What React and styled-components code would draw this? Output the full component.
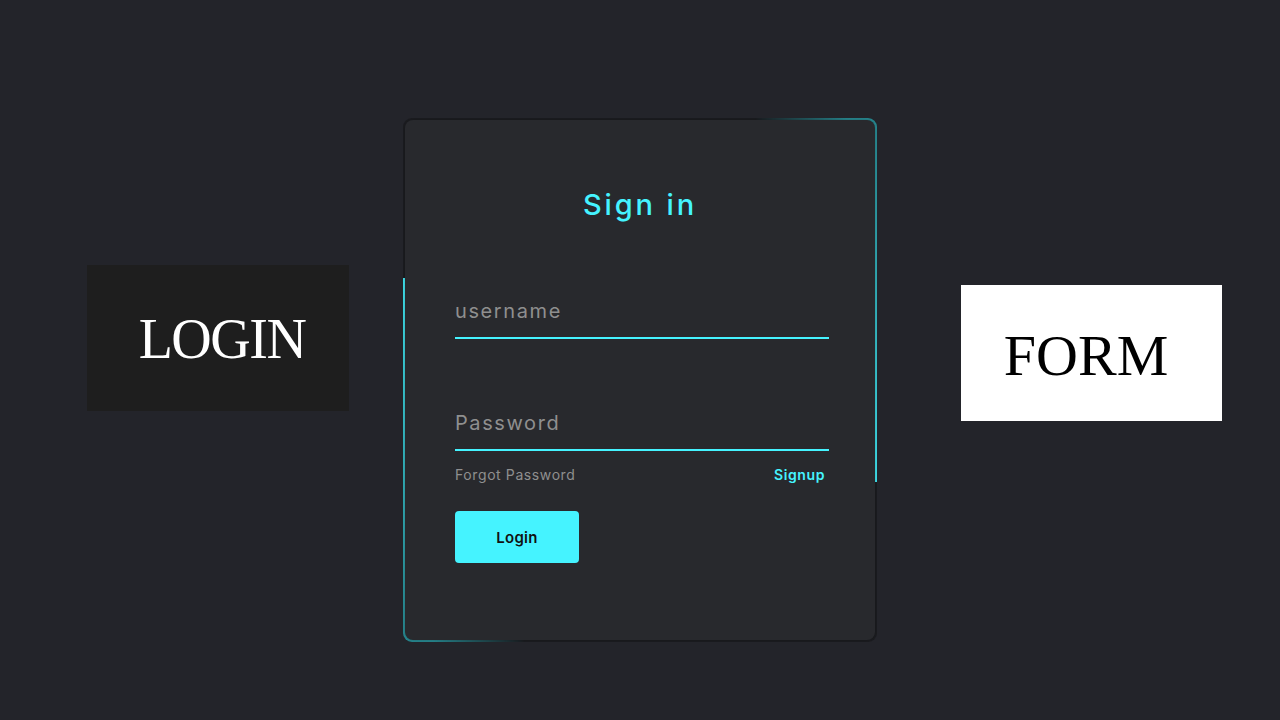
import styled, { createGlobalStyle } from "styled-components";

const GlobalStyle = createGlobalStyle`
  html, body {
    margin: 0;
    padding: 0;
    background: #23242a;
  }
  * {
    box-sizing: border-box;
  }
`;

const Page = styled.div`
  width: 1280px;
  height: 720px;
  display: flex;
  align-items: flex-start;
  padding-left: 87px;
  background: #23242a;
  font-family: Inter, "Noto Sans", sans-serif;
`;

const WordBox = styled.div`
  width: ${(p) => p.$w}px;
  height: ${(p) => p.$h}px;
  margin-top: ${(p) => p.$top}px;
  margin-left: ${(p) => p.$left || 0}px;
  display: flex;
  align-items: center;
  justify-content: center;
  background: ${(p) => (p.$light ? "#ffffff" : "#1e1e1e")};
  color: ${(p) => (p.$light ? "#000000" : "#ffffff")};
  font-family: "Liberation Serif", serif;
  font-size: ${(p) => p.$size}px;
  letter-spacing: ${(p) => p.$spacing || 0}px;
  padding: ${(p) => p.$pad || "0"};
`;

const Frame = styled.div`
  position: relative;
  width: 474px;
  height: 524px;
  margin-top: 118px;
  margin-left: 54px;
  border-radius: 9px;
  overflow: hidden;
  background: #1d1e22;
`;

// the two glowing border beams, hidden behind the card except for the rim
const Beam = styled.span`
  position: absolute;
  width: 122px;
  height: 364px;
  ${(p) =>
    p.$end
      ? `right: 0; top: 0;
         background: linear-gradient(to bottom, #2a8f98, #45f3ff);
         -webkit-mask-image: linear-gradient(to right, transparent, #000 75%);
         mask-image: linear-gradient(to right, transparent, #000 75%);`
      : `left: 0; bottom: 0;
         background: linear-gradient(to bottom, #45f3ff, #2a8f98);
         -webkit-mask-image: linear-gradient(to left, transparent, #000 75%);
         mask-image: linear-gradient(to left, transparent, #000 75%);`}
`;

const Card = styled.form`
  position: absolute;
  inset: 2px;
  z-index: 1;
  border-radius: 8px;
  background: #28292d;
  box-shadow: 0 0 6px rgba(0, 0, 0, 0.35);
  display: flex;
  flex-direction: column;
  padding: 65px 46px 0 50px;
`;

const Title = styled.h2`
  margin: 0;
  padding-right: 4px;
  text-align: center;
  color: #45f3ff;
  font-size: 29px;
  line-height: 40px;
  font-weight: 500;
  letter-spacing: 0.1em;
`;

const Field = styled.div`
  margin-top: ${(p) => p.$top}px;
  padding-bottom: 14px;
  border-bottom: 2px solid #45f3ff;
  color: #8f8f8f;
  font-size: 20px;
  line-height: 24px;
  letter-spacing: 1.6px;
`;

const Links = styled.div`
  margin-top: 14px;
  padding-right: 4px;
  display: flex;
  justify-content: space-between;
  font-size: 14px;
  line-height: 20px;
  letter-spacing: 0.6px;
`;

const LinkText = styled.a`
  color: ${(p) => (p.$accent ? "#45f3ff" : "#8f8f8f")};
  font-weight: ${(p) => (p.$accent ? 600 : 400)};
  text-decoration: none;
`;

const Button = styled.button`
  margin-top: 26px;
  width: 124px;
  height: 52px;
  border: none;
  border-radius: 4px;
  background: #45f3ff;
  color: #111;
  font-family: Inter, "Noto Sans", sans-serif;
  font-size: 15px;
  font-weight: 600;
  letter-spacing: 0.02em;
`;

export default function App() {
  return (
    <>
      <GlobalStyle />
      <Page>
        <WordBox $w={262} $h={146} $top={265} $size={56} $spacing={-1.5} $pad="2px 0 0 8px">
          LOGIN
        </WordBox>
        <Frame>
          <Beam $end />
          <Beam />
          <Card onSubmit={(e) => e.preventDefault()}>
            <Title>Sign in</Title>
            <Field $top={74}>username</Field>
            <Field $top={72}>Password</Field>
            <Links>
              <LinkText>Forgot Password</LinkText>
              <LinkText $accent>Signup</LinkText>
            </Links>
            <Button type="submit">Login</Button>
          </Card>
        </Frame>
        <WordBox $w={261} $h={136} $top={285} $left={84} $size={58} $light $pad="5px 11px 0 0">
          FORM
        </WordBox>
      </Page>
    </>
  );
}
